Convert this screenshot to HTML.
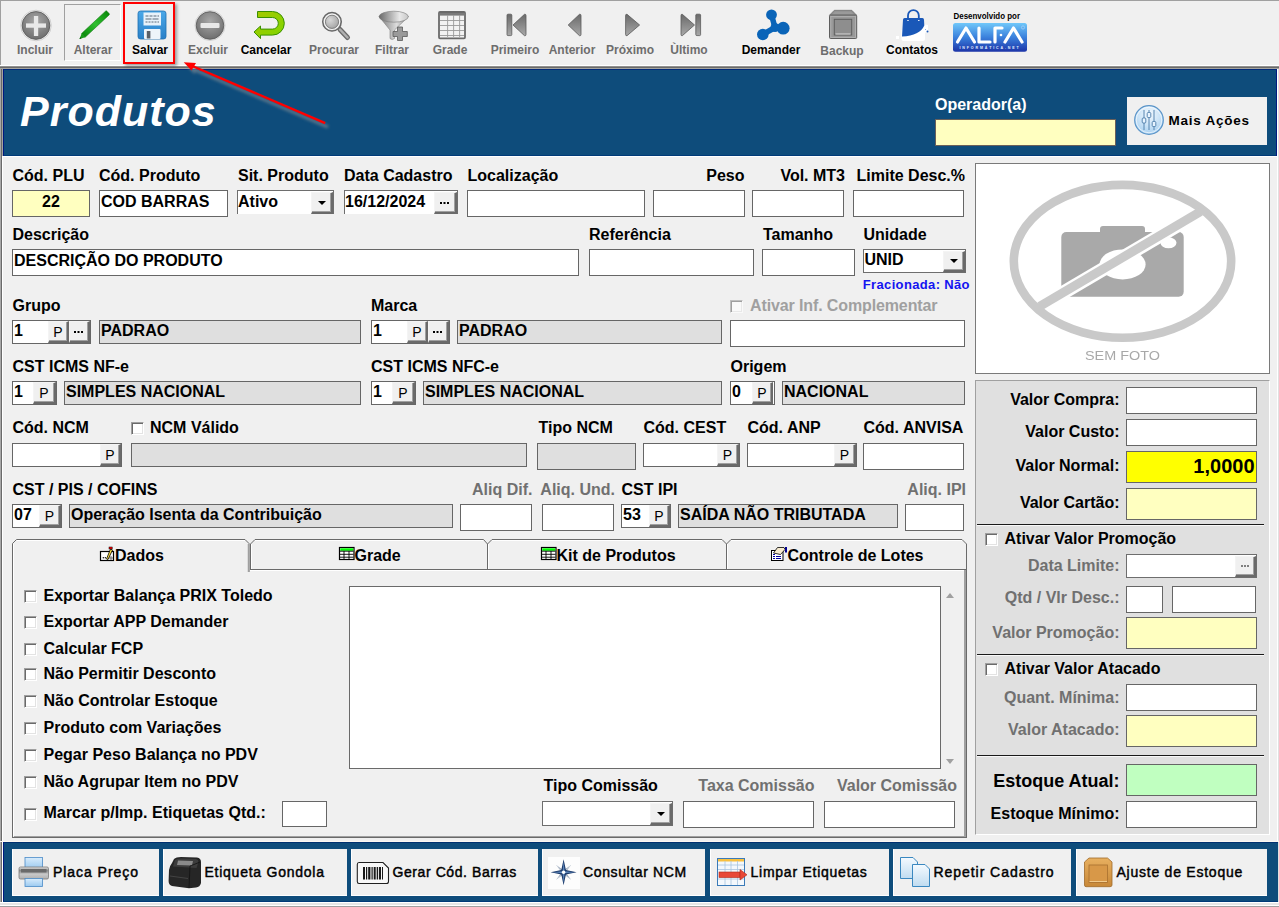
<!DOCTYPE html><html><head><meta charset="utf-8"><style>
*{margin:0;padding:0;box-sizing:border-box}
html,body{width:1279px;height:907px;overflow:hidden;background:#f0f0f0;font-family:"Liberation Sans", sans-serif}
.t{position:absolute;white-space:nowrap;font-family:"Liberation Sans", sans-serif}
.b{position:absolute}
.btn{position:absolute;background:#f0f0f0;border-top:1px solid #f4f4f4;border-left:1px solid #f4f4f4;border-right:2px solid #6a6a6a;border-bottom:2px solid #6a6a6a;box-shadow:inset -1px -1px 0 #a0a0a0}
.pl{position:absolute;left:0;right:0;top:50%;margin-top:-8px;text-align:center;font-size:14px;line-height:16px;font-weight:normal;font-family:"Liberation Sans", sans-serif;color:#000}
.el{position:absolute;left:50%;top:50%;margin-left:-5px;margin-top:-1px;width:2px;height:2px;background:#000;box-shadow:3.5px 0 0 #000,7px 0 0 #000}
.ar{position:absolute;left:50%;top:50%;margin-left:-4px;margin-top:-2px;width:0;height:0;border-left:4px solid transparent;border-right:4px solid transparent;border-top:4px solid #000}
svg{position:absolute}
.cb{position:absolute;width:13px;height:13px;background:#fff;border-top:1px solid #a0a0a0;border-left:1px solid #a0a0a0;border-bottom:1px solid #fff;border-right:1px solid #fff;box-shadow:inset 1px 1px 0 #6a6a6a,inset -1px -1px 0 #e3e3e3}
</style></head><body>
<div class="b" style="left:0px;top:0px;width:1279px;height:1px;background:#a0a0a0;"></div>
<div class="b" style="left:0px;top:0px;width:1px;height:65px;background:#a0a0a0;"></div>
<div class="b" style="left:0px;top:65px;width:1279px;height:1px;background:#ffffff;"></div>
<div class="b" style="left:0px;top:66px;width:1279px;height:1px;background:#909090;"></div>
<div class="b" style="left:0px;top:67px;width:1279px;height:1px;background:#6a6a6a;"></div>
<div class="b" style="left:0px;top:68px;width:1279px;height:1px;background:#a4a4a0;"></div>
<div class="b" style="left:64px;top:4px;width:57px;height:57px;border-top:1px solid #a0a0a0;border-left:1px solid #a0a0a0;border-bottom:1px solid #fff;border-right:1px solid #fff"></div>
<div class="t" style="left:-265px;width:600px;text-align:center;top:43.84px;font-size:12px;line-height:12px;color:#6d6d6d;font-weight:bold;">Incluir</div>
<div class="t" style="left:-207px;width:600px;text-align:center;top:43.84px;font-size:12px;line-height:12px;color:#6d6d6d;font-weight:bold;">Alterar</div>
<div class="t" style="left:-150px;width:600px;text-align:center;top:43.84px;font-size:12px;line-height:12px;color:#000;font-weight:bold;">Salvar</div>
<div class="t" style="left:-92px;width:600px;text-align:center;top:43.84px;font-size:12px;line-height:12px;color:#6d6d6d;font-weight:bold;">Excluir</div>
<div class="t" style="left:-34px;width:600px;text-align:center;top:43.84px;font-size:12px;line-height:12px;color:#000;font-weight:bold;">Cancelar</div>
<div class="t" style="left:34px;width:600px;text-align:center;top:43.84px;font-size:12px;line-height:12px;color:#6d6d6d;font-weight:bold;">Procurar</div>
<div class="t" style="left:92px;width:600px;text-align:center;top:43.84px;font-size:12px;line-height:12px;color:#6d6d6d;font-weight:bold;">Filtrar</div>
<div class="t" style="left:150px;width:600px;text-align:center;top:43.84px;font-size:12px;line-height:12px;color:#6d6d6d;font-weight:bold;">Grade</div>
<div class="t" style="left:215px;width:600px;text-align:center;top:43.84px;font-size:12px;line-height:12px;color:#6d6d6d;font-weight:bold;">Primeiro</div>
<div class="t" style="left:272px;width:600px;text-align:center;top:43.84px;font-size:12px;line-height:12px;color:#6d6d6d;font-weight:bold;">Anterior</div>
<div class="t" style="left:330px;width:600px;text-align:center;top:43.84px;font-size:12px;line-height:12px;color:#6d6d6d;font-weight:bold;">Próximo</div>
<div class="t" style="left:389px;width:600px;text-align:center;top:43.84px;font-size:12px;line-height:12px;color:#6d6d6d;font-weight:bold;">Ùltimo</div>
<div class="t" style="left:471px;width:600px;text-align:center;top:43.84px;font-size:12px;line-height:12px;color:#000;font-weight:bold;">Demander</div>
<div class="t" style="left:542px;width:600px;text-align:center;top:44.84px;font-size:12px;line-height:12px;color:#6d6d6d;font-weight:bold;">Backup</div>
<div class="t" style="left:612px;width:600px;text-align:center;top:43.84px;font-size:12px;line-height:12px;color:#000;font-weight:bold;">Contatos</div>
<svg style="left:0;top:0" width="1040" height="62" viewBox="0 0 1040 62">
<defs>
<radialGradient id="gc" cx="0.5" cy="0.35" r="0.65"><stop offset="0" stop-color="#a8a8a8"/><stop offset="1" stop-color="#6e6e6e"/></radialGradient>
<linearGradient id="gcan" x1="0" y1="0" x2="1" y2="1"><stop offset="0" stop-color="#a6c800"/><stop offset="1" stop-color="#7ed600"/></linearGradient>
<linearGradient id="gpen" x1="0" y1="0" x2="1" y2="0"><stop offset="0" stop-color="#0a8a0a"/><stop offset="0.5" stop-color="#30c030"/><stop offset="1" stop-color="#0a8a0a"/></linearGradient>
<linearGradient id="gflop" x1="0" y1="0" x2="0" y2="1"><stop offset="0" stop-color="#4aa8e8"/><stop offset="1" stop-color="#2a80c8"/></linearGradient>
<radialGradient id="glens" cx="0.4" cy="0.4" r="0.7"><stop offset="0" stop-color="#d8d8d8"/><stop offset="1" stop-color="#909090"/></radialGradient>
<linearGradient id="gfun" x1="0" y1="0" x2="1" y2="0"><stop offset="0" stop-color="#777"/><stop offset="0.6" stop-color="#ddd"/><stop offset="1" stop-color="#888"/></linearGradient>
<linearGradient id="gfun2" x1="0" y1="0" x2="1" y2="0"><stop offset="0" stop-color="#6a6a6a"/><stop offset="0.7" stop-color="#e8e8e8"/><stop offset="1" stop-color="#c8c8c8"/></linearGradient>
<linearGradient id="gnav" x1="0" y1="0" x2="0" y2="1"><stop offset="0" stop-color="#6a6a6a"/><stop offset="1" stop-color="#a8a8a8"/></linearGradient>
<linearGradient id="gbk" x1="0" y1="0" x2="0" y2="1"><stop offset="0" stop-color="#a0a0a0"/><stop offset="1" stop-color="#6a6a6a"/></linearGradient>
<linearGradient id="galfa" x1="0" y1="0" x2="0" y2="1"><stop offset="0" stop-color="#70c8fa"/><stop offset="0.5" stop-color="#3a80dc"/><stop offset="1" stop-color="#1c34a8"/></linearGradient>
</defs>
<!-- Incluir -->
<circle cx="36" cy="25.5" r="15.3" fill="none" stroke="#d0d0d0" stroke-width="1"/>
<circle cx="36" cy="25.5" r="13.9" fill="url(#gc)" stroke="#555" stroke-width="0.8"/>
<rect x="26" y="23.4" width="20" height="4.3" fill="#e8e8e8"/>
<rect x="33.9" y="16" width="4.3" height="20" fill="#e8e8e8"/>
<!-- Alterar pencil -->
<g transform="translate(79.5,39) rotate(-43)">
<rect x="5" y="-2.6" width="34" height="5.2" rx="1" fill="url(#gpen)" stroke="#0a700a" stroke-width="0.5"/>
<polygon points="0,0 5.5,-2.6 5.5,2.6" fill="#1a9a1a"/>
<polygon points="0,0 1.8,-0.9 1.8,0.9" fill="#0a500a"/>
</g>
<!-- Salvar floppy -->
<rect x="138" y="11" width="28" height="28" rx="2.5" fill="url(#gflop)" stroke="#1f6fb0" stroke-width="0.8"/>
<rect x="143.5" y="12.5" width="17.5" height="13" fill="#e8f2fa"/>
<g stroke="#5a6a7a" stroke-width="1">
<line x1="145.5" y1="16" x2="159" y2="16" stroke-dasharray="3,1"/>
<line x1="145.5" y1="19" x2="159" y2="19" stroke-dasharray="6,1"/>
<line x1="145.5" y1="22" x2="159" y2="22" stroke-dasharray="2,1"/>
</g>
<rect x="144" y="29" width="16.5" height="10" rx="1" fill="#eef4fa"/>
<rect x="146.8" y="31" width="3.6" height="7.5" fill="#5a6068"/>
<!-- Excluir -->
<circle cx="210" cy="25.5" r="15" fill="none" stroke="#d0d0d0" stroke-width="1"/>
<circle cx="210" cy="25.5" r="13.8" fill="url(#gc)" stroke="#555" stroke-width="0.8"/>
<rect x="200.5" y="23" width="19" height="5" rx="1" fill="#e8e8e8"/>
<!-- Cancelar -->
<path d="M257.5,11.5 L272.5,11.5 A11.8,11.8 0 0 1 272.5,35.1 L260.5,35.1 L260.5,38.6 L254,32 L260.5,26 L260.5,29.1 L272.5,29.1 A5.8,5.8 0 0 0 272.5,17.5 L257.5,17.5 Z" fill="url(#gcan)" stroke="#3a9000" stroke-width="1"/>
<!-- Procurar -->
<line x1="340" y1="29.5" x2="347.5" y2="37.5" stroke="#6a6a6a" stroke-width="5" stroke-linecap="round"/>
<line x1="340" y1="29.5" x2="347.5" y2="37.5" stroke="#b0b0b0" stroke-width="2.5" stroke-linecap="round"/>
<circle cx="332" cy="21.8" r="9.3" fill="url(#glens)" stroke="#666" stroke-width="1.4"/>
<circle cx="332" cy="21.8" r="7.6" fill="none" stroke="#f4f4f4" stroke-width="1.4"/>
<circle cx="332" cy="21.8" r="6.6" fill="none" stroke="#707070" stroke-width="0.8"/>
<!-- Filtrar -->
<path d="M379,16.5 L390,30 L390,38.5 Q392,40.5 394.5,38.5 L394.5,30 L408.5,16.5 Z" fill="url(#gfun)" stroke="#808080" stroke-width="0.6"/>
<ellipse cx="393.7" cy="16.7" rx="14.6" ry="5.5" fill="url(#gfun2)" stroke="#7a7a7a" stroke-width="0.6"/>
<path d="M397.5,27 h5 v4.5 h4.8 v5 h-4.8 v4 h-5 v-4 h-4.5 v-5 h4.5 Z" fill="#9a9a9a" stroke="#5a5a5a" stroke-width="0.8"/>
<!-- Grade -->
<rect x="439" y="12" width="26" height="26.3" rx="1" fill="#f2f2f2" stroke="#6a6a6a" stroke-width="1.8"/>
<rect x="440" y="13" width="24" height="2.6" fill="#7a7a7a"/>
<g stroke="#9a9a9a" stroke-width="0.9">
<line x1="440" y1="20.5" x2="464" y2="20.5"/><line x1="440" y1="25.5" x2="464" y2="25.5"/><line x1="440" y1="30.5" x2="464" y2="30.5"/><line x1="440" y1="35.5" x2="464" y2="35.5"/>
<line x1="447.6" y1="15" x2="447.6" y2="37"/><line x1="453.6" y1="15" x2="453.6" y2="37"/><line x1="459.6" y1="15" x2="459.6" y2="37"/>
</g>
<!-- Primeiro -->
<rect x="507" y="14.2" width="4.8" height="21.4" rx="1" fill="url(#gnav)" stroke="#5a5a5a" stroke-width="0.8"/>
<path d="M513,25 L524.5,14.3 Q526,14 526,15.5 L526,34.5 Q526,36 524.5,35.7 Z" fill="url(#gnav)" stroke="#5a5a5a" stroke-width="0.8"/>
<!-- Anterior -->
<path d="M568.2,25 L579.5,14.3 Q581,14 581,15.5 L581,34.5 Q581,36 579.5,35.7 Z" fill="url(#gnav)" stroke="#5a5a5a" stroke-width="0.8"/>
<!-- Proximo -->
<path d="M639.6,25 L627,14.3 Q625.6,14 625.6,15.5 L625.6,34.5 Q625.6,36 627,35.7 Z" fill="url(#gnav)" stroke="#5a5a5a" stroke-width="0.8"/>
<!-- Ultimo -->
<path d="M694.5,25 L682.3,14.3 Q681,14 681,15.5 L681,34.5 Q681,36 682.3,35.7 Z" fill="url(#gnav)" stroke="#5a5a5a" stroke-width="0.8"/>
<rect x="695.8" y="14.2" width="4.8" height="21.4" rx="1" fill="url(#gnav)" stroke="#5a5a5a" stroke-width="0.8"/>
<!-- Demander -->
<g fill="#0a64b8" stroke="#0a64b8" stroke-linecap="round">
<line x1="771.5" y1="15" x2="775" y2="27.5" stroke-width="5.5"/>
<line x1="775" y1="27.5" x2="783.4" y2="28.3" stroke-width="6.5"/>
<line x1="775" y1="27.5" x2="762.6" y2="34.6" stroke-width="5.5"/>
<circle cx="771.5" cy="14.8" r="5.4" stroke="none"/>
<circle cx="783.2" cy="28.2" r="6.4" stroke="none"/>
<circle cx="762.8" cy="34.5" r="5.8" stroke="none"/>
<circle cx="775" cy="27.5" r="4.5" stroke="none"/>
</g>
<!-- Backup -->
<path d="M834.3,10.3 L851.8,10.3 L856.6,15.2 L829.5,15.2 Z" fill="#8e8e8e" stroke="#6a6a6a" stroke-width="0.7"/>
<path d="M835,11.5 L851,11.5 L853.5,14.3 L832.5,14.3 Z" fill="#9a9a9a"/>
<rect x="829.5" y="15.2" width="27.2" height="23.3" rx="1" fill="#999" stroke="#5e5e5e" stroke-width="1"/>
<rect x="830.8" y="16.3" width="24.6" height="21.1" fill="none" stroke="#b4b4b4" stroke-width="0.8"/>
<rect x="834.3" y="19.3" width="17.4" height="15.7" fill="#8e8e8e" stroke="#5e5e5e" stroke-width="1"/>
<line x1="835.5" y1="34" x2="850.5" y2="34" stroke="#d8d8d8" stroke-width="1"/>
<!-- Contatos -->
<path d="M901.5,30 L925,24.5 L928,25 L928,31 L925,33 L925,39 Q925,41 923,41 L903.5,41 Q901.5,41 901.5,39 Z" fill="#ffffff"/>
<rect x="896" y="36" width="3" height="3" fill="#fff"/>
<path d="M908,19 L908,15.5 A5.4,5.4 0 0 1 918.8,15.5 L918.8,19" fill="none" stroke="#1a58b8" stroke-width="1.8"/>
<path d="M904.6,18.1 L922.4,18.1 Q924,18.1 924,19.8 L924.3,25.4 Q920,35.5 902,36.6 L903,19.8 Q903,18.1 904.6,18.1 Z" fill="#1a58b8"/>
<ellipse cx="908" cy="20.5" rx="0.9" ry="0.6" fill="#fff"/><ellipse cx="918.8" cy="20.5" rx="0.9" ry="0.6" fill="#fff"/>
<circle cx="927.5" cy="31.5" r="1" fill="#1a58b8"/><circle cx="925.5" cy="29.5" r="0.5" fill="#6a98d8"/>
<!-- ALFA -->
<text x="953.5" y="18.8" font-family="Liberation Sans" font-weight="bold" font-size="8.2" fill="#000" textLength="66.5" lengthAdjust="spacingAndGlyphs">Desenvolvido por</text>
<rect x="953" y="22.9" width="74" height="28.9" rx="2.5" fill="url(#galfa)"/>
<g stroke="#fff" stroke-width="3.2" stroke-linecap="round" stroke-linejoin="round" fill="none">
<polyline points="957.5,42 966,28 974.5,42"/>
<polyline points="979,28 979,42 990,42"/>
<polyline points="995,42 995,28 1002,28"/>
<polyline points="1005,42 1013.5,28 1022,42"/>
</g>
<circle cx="1001" cy="35" r="1.3" fill="#fff"/>
<circle cx="1023" cy="27.5" r="1.6" fill="none" stroke="#b8d8f8" stroke-width="0.6"/>
<text x="959.5" y="49.4" font-family="Liberation Sans" font-weight="bold" font-size="3.6" fill="#e0ecff" letter-spacing="1.85">INFORMÁTICA.NET</text>
</svg>

<div class="b" style="left:123px;top:2px;width:52px;height:62px;border:2px solid #ff0000;box-shadow:2px 2px 3px rgba(0,0,0,0.35)"></div>
<div class="b" style="left:0px;top:69px;width:1279px;height:773px;background:#f0f0f0;"></div>
<div class="b" style="left:0px;top:69px;width:1px;height:838px;background:#a8a8a8;"></div>
<div class="b" style="left:1px;top:69px;width:1px;height:838px;background:#6a6a6a;"></div>
<div class="b" style="left:2px;top:69px;width:1px;height:87px;background:#a4a4a0;"></div>
<div class="b" style="left:2px;top:156px;width:1px;height:746px;background:#ffffff;"></div>
<div class="b" style="left:1277px;top:69px;width:1px;height:833px;background:#ffffff;"></div>
<div class="b" style="left:1278px;top:69px;width:1px;height:833px;background:#e0e0e0;"></div>
<div class="b" style="left:3px;top:69px;width:1274px;height:87px;background:#0e4c7b;"></div>
<div class="b" style="left:3px;top:69px;width:1274px;height:1px;background:#002878;"></div>
<div class="b" style="left:3px;top:155px;width:1274px;height:1px;background:#003a78;"></div>
<div class="b" style="left:3px;top:69px;width:1px;height:87px;background:#001a80;"></div>
<div class="b" style="left:1276px;top:69px;width:1px;height:87px;background:#001a80;"></div>
<div class="b" style="left:3px;top:156px;width:1274px;height:1px;background:#ffffff;"></div>
<div class="t" style="left:20px;top:90.10px;font-size:43px;line-height:43px;color:#fff;font-weight:bold;font-style:italic;letter-spacing:1px;">Produtos</div>
<div class="t" style="left:935px;top:97.46px;font-size:16px;line-height:16px;color:#fff;font-weight:bold;">Operador(a)</div>
<div class="b" style="left:935px;top:119px;width:181px;height:27px;background:#ffffc0;border:1px solid #6a605a;"></div>
<div class="b" style="left:1127px;top:97px;width:140px;height:48px;background:#f0f0f0;"></div>
<div class="t" style="left:1168.5px;top:113.57px;font-size:13.5px;line-height:13.5px;color:#000;font-weight:bold;letter-spacing:0.75px;">Mais Ações</div>
<svg style="left:1132px;top:103px" width="34" height="34" viewBox="1132 103 34 34">
<defs><radialGradient id="gmais" cx="0.5" cy="0.3" r="0.7"><stop offset="0" stop-color="#f4faff"/><stop offset="1" stop-color="#a8d0f0"/></radialGradient></defs>
<circle cx="1149" cy="120" r="14.3" fill="url(#gmais)" stroke="#5a94c8" stroke-width="1.2"/>
<circle cx="1149" cy="120" r="12.8" fill="none" stroke="#ffffff" stroke-width="0.8" opacity="0.8"/>
<g stroke="#4a7aa8" stroke-width="0.9" fill="#e8f4ff">
<line x1="1144" y1="110" x2="1144" y2="130"/><line x1="1149" y1="110" x2="1149" y2="130"/><line x1="1154" y1="110" x2="1154" y2="130"/>
<rect x="1142.2" y="118" width="3.6" height="5" rx="1"/><rect x="1147.2" y="112.5" width="3.6" height="5" rx="1"/><rect x="1152.2" y="121.5" width="3.6" height="5" rx="1"/>
</g>
</svg>

<svg style="left:0;top:0" width="400" height="160"><defs><filter id="sh" x="-30%" y="-30%" width="160%" height="160%"><feGaussianBlur stdDeviation="1.6"/></filter></defs><g opacity="0.55" transform="translate(3,4)" filter="url(#sh)"><line x1="325" y1="123" x2="190" y2="65" stroke="#9a9a9a" stroke-width="3"/><polygon points="183.75,62.2 195.5,63 191.5,70" fill="#9a9a9a"/></g><line x1="325.2" y1="123.1" x2="190" y2="65" stroke="#ff0000" stroke-width="2.4"/><polygon points="183.75,62.2 196,63 191.5,70.5" fill="#ff0000"/></svg>
<div class="t" style="left:12.5px;top:167.96px;font-size:16px;line-height:16px;color:#000;font-weight:bold;">Cód. PLU</div>
<div class="t" style="left:99px;top:167.96px;font-size:16px;line-height:16px;color:#000;font-weight:bold;">Cód. Produto</div>
<div class="t" style="left:238px;top:167.96px;font-size:16px;line-height:16px;color:#000;font-weight:bold;">Sit. Produto</div>
<div class="t" style="left:344px;top:167.96px;font-size:16px;line-height:16px;color:#000;font-weight:bold;">Data Cadastro</div>
<div class="t" style="left:467.5px;top:167.96px;font-size:16px;line-height:16px;color:#000;font-weight:bold;">Localização</div>
<div class="t" style="left:144.5px;width:600px;text-align:right;top:167.96px;font-size:16px;line-height:16px;color:#000;font-weight:bold;">Peso</div>
<div class="t" style="left:245px;width:600px;text-align:right;top:167.96px;font-size:16px;line-height:16px;color:#000;font-weight:bold;">Vol. MT3</div>
<div class="t" style="left:365px;width:600px;text-align:right;top:167.96px;font-size:16px;line-height:16px;color:#000;font-weight:bold;">Limite Desc.%</div>
<div class="b" style="left:12px;top:190px;width:78px;height:27px;background:#ffffc0;border:1px solid #666666;"></div>
<div class="t" style="left:-249.0px;width:600px;text-align:center;top:194.26px;font-size:16px;line-height:16px;color:#000;font-weight:bold;">22</div>
<div class="b" style="left:99px;top:190px;width:129px;height:27px;background:#fff;border:1px solid #666666;"></div>
<div class="t" style="left:101px;top:194.26px;font-size:16px;line-height:16px;color:#000;font-weight:bold;">COD BARRAS</div>
<div class="b" style="left:237px;top:190px;width:97px;height:24px;background:#fff;border-top:1px solid #6e6e6e;border-left:1px solid #6e6e6e;border-right:1px solid #6e6e6e"></div>
<div class="t" style="left:238px;top:194.46px;font-size:16px;line-height:16px;color:#000;font-weight:bold;">Ativo</div>
<div class="btn" style="left:311px;top:192px;width:22px;height:22px;"><span class="ar"></span></div>
<div class="b" style="left:344px;top:190px;width:114px;height:24px;background:#fff;border-top:1px solid #6e6e6e;border-left:1px solid #6e6e6e;border-right:1px solid #6e6e6e"></div>
<div class="t" style="left:345px;top:194.46px;font-size:16px;line-height:16px;color:#000;font-weight:bold;">16/12/2024</div>
<div class="btn" style="left:434px;top:192px;width:23px;height:22px;"><span class="el"></span></div>
<div class="b" style="left:467px;top:190px;width:178px;height:27px;background:#fff;border:1px solid #666666;"></div>
<div class="b" style="left:653px;top:190px;width:92px;height:27px;background:#fff;border:1px solid #666666;"></div>
<div class="b" style="left:752px;top:190px;width:92px;height:27px;background:#fff;border:1px solid #666666;"></div>
<div class="b" style="left:853px;top:190px;width:111px;height:27px;background:#fff;border:1px solid #666666;"></div>
<div class="t" style="left:12.5px;top:227.46px;font-size:16px;line-height:16px;color:#000;font-weight:bold;">Descrição</div>
<div class="t" style="left:589px;top:227.46px;font-size:16px;line-height:16px;color:#000;font-weight:bold;">Referência</div>
<div class="t" style="left:763px;top:227.46px;font-size:16px;line-height:16px;color:#000;font-weight:bold;">Tamanho</div>
<div class="t" style="left:863.5px;top:227.46px;font-size:16px;line-height:16px;color:#000;font-weight:bold;">Unidade</div>
<div class="b" style="left:12px;top:249px;width:567px;height:27px;background:#fff;border:1px solid #666666;"></div>
<div class="t" style="left:14px;top:253.26px;font-size:16px;line-height:16px;color:#000;font-weight:bold;">DESCRIÇÃO DO PRODUTO</div>
<div class="b" style="left:589px;top:249px;width:165px;height:27px;background:#fff;border:1px solid #666666;"></div>
<div class="b" style="left:762px;top:249px;width:93px;height:27px;background:#fff;border:1px solid #666666;"></div>
<div class="b" style="left:863px;top:249px;width:103px;height:24px;background:#fff;border-top:1px solid #6e6e6e;border-left:1px solid #6e6e6e;border-right:1px solid #6e6e6e;border-bottom:1px solid #6e6e6e"></div>
<div class="t" style="left:864.5px;top:251.96px;font-size:16px;line-height:16px;color:#000;font-weight:bold;">UNID</div>
<div class="btn" style="left:943px;top:251px;width:22px;height:21px;"><span class="ar"></span></div>
<div class="t" style="left:862.8px;top:278.00px;font-size:13px;line-height:13px;color:#1414f0;font-weight:bold;letter-spacing:0.35px;">Fracionada: Não</div>
<div class="t" style="left:12.5px;top:298.46px;font-size:16px;line-height:16px;color:#000;font-weight:bold;">Grupo</div>
<div class="t" style="left:371px;top:298.46px;font-size:16px;line-height:16px;color:#000;font-weight:bold;">Marca</div>
<div class="cb" style="left:730px;top:300px;opacity:0.6"></div>
<div class="t" style="left:750px;top:298.46px;font-size:16px;line-height:16px;color:#a0a0a0;font-weight:bold;letter-spacing:-0.12px;">Ativar Inf. Complementar</div>
<div class="b" style="left:12px;top:320px;width:79px;height:24px;background:#fff;border:1px solid #666666;"></div>
<div class="t" style="left:14px;top:322.76px;font-size:16px;line-height:16px;color:#000;font-weight:bold;">1</div>
<div class="btn" style="left:48px;top:321px;width:21px;height:22px;"><span class="pl">P</span></div>
<div class="btn" style="left:69px;top:321px;width:21px;height:22px;"><span class="el"></span></div>
<div class="b" style="left:99px;top:320px;width:262px;height:24px;background:#dfdfdf;border:1px solid #666666;"></div>
<div class="t" style="left:101px;top:322.76px;font-size:16px;line-height:16px;color:#000;font-weight:bold;">PADRAO</div>
<div class="b" style="left:371px;top:320px;width:79px;height:24px;background:#fff;border:1px solid #666666;"></div>
<div class="t" style="left:373px;top:322.76px;font-size:16px;line-height:16px;color:#000;font-weight:bold;">1</div>
<div class="btn" style="left:407px;top:321px;width:21px;height:22px;"><span class="pl">P</span></div>
<div class="btn" style="left:428px;top:321px;width:21px;height:22px;"><span class="el"></span></div>
<div class="b" style="left:457px;top:320px;width:265px;height:24px;background:#dfdfdf;border:1px solid #666666;"></div>
<div class="t" style="left:459px;top:322.76px;font-size:16px;line-height:16px;color:#000;font-weight:bold;">PADRAO</div>
<div class="b" style="left:730px;top:320px;width:235px;height:27px;background:#fff;border:1px solid #666666;"></div>
<div class="t" style="left:12.5px;top:359.46px;font-size:16px;line-height:16px;color:#000;font-weight:bold;">CST ICMS NF-e</div>
<div class="t" style="left:371px;top:359.46px;font-size:16px;line-height:16px;color:#000;font-weight:bold;">CST ICMS NFC-e</div>
<div class="t" style="left:730.5px;top:359.46px;font-size:16px;line-height:16px;color:#000;font-weight:bold;">Origem</div>
<div class="b" style="left:12px;top:381px;width:45px;height:24px;background:#fff;border:1px solid #666666;"></div>
<div class="t" style="left:14px;top:383.76px;font-size:16px;line-height:16px;color:#000;font-weight:bold;">1</div>
<div class="btn" style="left:33px;top:382px;width:23px;height:22px;"><span class="pl">P</span></div>
<div class="b" style="left:64px;top:381px;width:297px;height:24px;background:#dfdfdf;border:1px solid #666666;"></div>
<div class="t" style="left:66px;top:383.76px;font-size:16px;line-height:16px;color:#000;font-weight:bold;">SIMPLES NACIONAL</div>
<div class="b" style="left:371px;top:381px;width:45px;height:24px;background:#fff;border:1px solid #666666;"></div>
<div class="t" style="left:373px;top:383.76px;font-size:16px;line-height:16px;color:#000;font-weight:bold;">1</div>
<div class="btn" style="left:392px;top:382px;width:23px;height:22px;"><span class="pl">P</span></div>
<div class="b" style="left:423px;top:381px;width:299px;height:24px;background:#dfdfdf;border:1px solid #666666;"></div>
<div class="t" style="left:425px;top:383.76px;font-size:16px;line-height:16px;color:#000;font-weight:bold;">SIMPLES NACIONAL</div>
<div class="b" style="left:730px;top:381px;width:45px;height:24px;background:#fff;border:1px solid #666666;"></div>
<div class="t" style="left:732px;top:383.76px;font-size:16px;line-height:16px;color:#000;font-weight:bold;">0</div>
<div class="btn" style="left:752px;top:382px;width:21px;height:22px;"><span class="pl">P</span></div>
<div class="b" style="left:782px;top:381px;width:183px;height:24px;background:#dfdfdf;border:1px solid #666666;"></div>
<div class="t" style="left:784px;top:383.76px;font-size:16px;line-height:16px;color:#000;font-weight:bold;">NACIONAL</div>
<div class="t" style="left:12.5px;top:420.46px;font-size:16px;line-height:16px;color:#000;font-weight:bold;">Cód. NCM</div>
<div class="cb" style="left:131px;top:422px"></div>
<div class="t" style="left:150px;top:420.46px;font-size:16px;line-height:16px;color:#000;font-weight:bold;">NCM Válido</div>
<div class="t" style="left:538.5px;top:420.46px;font-size:16px;line-height:16px;color:#000;font-weight:bold;">Tipo NCM</div>
<div class="t" style="left:643.5px;top:420.46px;font-size:16px;line-height:16px;color:#000;font-weight:bold;">Cód. CEST</div>
<div class="t" style="left:747.5px;top:420.46px;font-size:16px;line-height:16px;color:#000;font-weight:bold;">Cód. ANP</div>
<div class="t" style="left:863.5px;top:420.46px;font-size:16px;line-height:16px;color:#000;font-weight:bold;">Cód. ANVISA</div>
<div class="b" style="left:12px;top:443px;width:110px;height:24px;background:#fff;border:1px solid #666666;"></div>
<div class="btn" style="left:100px;top:444px;width:21px;height:22px;"><span class="pl">P</span></div>
<div class="b" style="left:131px;top:443px;width:396px;height:24px;background:#dfdfdf;border:1px solid #666666;"></div>
<div class="b" style="left:537px;top:443px;width:99px;height:27px;background:#dfdfdf;border:1px solid #666666;"></div>
<div class="b" style="left:643px;top:443px;width:97px;height:24px;background:#fff;border:1px solid #666666;"></div>
<div class="btn" style="left:717px;top:444px;width:22px;height:22px;"><span class="pl">P</span></div>
<div class="b" style="left:747px;top:443px;width:110px;height:24px;background:#fff;border:1px solid #666666;"></div>
<div class="btn" style="left:834px;top:444px;width:22px;height:22px;"><span class="pl">P</span></div>
<div class="b" style="left:863px;top:443px;width:101px;height:27px;background:#fff;border:1px solid #666666;"></div>
<div class="t" style="left:12.5px;top:481.96px;font-size:16px;line-height:16px;color:#000;font-weight:bold;">CST / PIS / COFINS</div>
<div class="t" style="left:-67.5px;width:600px;text-align:right;top:481.96px;font-size:16px;line-height:16px;color:#707070;font-weight:bold;">Aliq Dif.</div>
<div class="t" style="left:15px;width:600px;text-align:right;top:481.96px;font-size:16px;line-height:16px;color:#707070;font-weight:bold;">Aliq. Und.</div>
<div class="t" style="left:621.5px;top:481.96px;font-size:16px;line-height:16px;color:#000;font-weight:bold;">CST IPI</div>
<div class="t" style="left:366px;width:600px;text-align:right;top:481.96px;font-size:16px;line-height:16px;color:#707070;font-weight:bold;">Aliq. IPI</div>
<div class="b" style="left:12px;top:504px;width:50px;height:24px;background:#fff;border:1px solid #666666;"></div>
<div class="t" style="left:14px;top:506.76px;font-size:16px;line-height:16px;color:#000;font-weight:bold;">07</div>
<div class="btn" style="left:39px;top:505px;width:22px;height:22px;"><span class="pl">P</span></div>
<div class="b" style="left:69px;top:504px;width:384px;height:24px;background:#dfdfdf;border:1px solid #666666;"></div>
<div class="t" style="left:71px;top:506.76px;font-size:16px;line-height:16px;color:#000;font-weight:bold;">Operação Isenta da Contribuição</div>
<div class="b" style="left:460px;top:504px;width:72px;height:27px;background:#fff;border:1px solid #666666;"></div>
<div class="b" style="left:542px;top:504px;width:72px;height:27px;background:#fff;border:1px solid #666666;"></div>
<div class="b" style="left:621px;top:504px;width:50px;height:24px;background:#fff;border:1px solid #666666;"></div>
<div class="t" style="left:623px;top:506.76px;font-size:16px;line-height:16px;color:#000;font-weight:bold;">53</div>
<div class="btn" style="left:649px;top:505px;width:21px;height:22px;"><span class="pl">P</span></div>
<div class="b" style="left:678px;top:504px;width:220px;height:24px;background:#dfdfdf;border:1px solid #666666;"></div>
<div class="t" style="left:680px;top:506.76px;font-size:16px;line-height:16px;color:#000;font-weight:bold;">SAÍDA NÃO TRIBUTADA</div>
<div class="b" style="left:905px;top:504px;width:59px;height:27px;background:#fff;border:1px solid #666666;"></div>
<svg style="left:0;top:530px" width="980" height="315" viewBox="0 530 980 315">
<!-- panel body -->
<rect x="12" y="569" width="954" height="268" fill="#f0f0f0"/>
<!-- panel borders -->
<line x1="12.5" y1="569" x2="12.5" y2="837.5" stroke="#6a6a6a" stroke-width="1"/>
<line x1="13.5" y1="569" x2="13.5" y2="836" stroke="#ffffff" stroke-width="1"/>
<line x1="12" y1="837.5" x2="967" y2="837.5" stroke="#6a6a6a" stroke-width="1"/>
<line x1="14" y1="836.5" x2="965" y2="836.5" stroke="#a0a0a0" stroke-width="1"/>
<line x1="966.5" y1="569" x2="966.5" y2="838" stroke="#6a6a6a" stroke-width="1"/>
<line x1="964.5" y1="570" x2="964.5" y2="837" stroke="#a0a0a0" stroke-width="1"/>
<line x1="965.5" y1="570" x2="965.5" y2="837" stroke="#a0a0a0" stroke-width="1"/>
<!-- inactive tabs -->
<path d="M250.5,569.5 V544 L255,539.5 H483.5 L487.5,544 V569.5" fill="#f0f0f0" stroke="#6a6a6a" stroke-width="1"/>
<path d="M487.5,569.5 V544 L492,539.5 H722 L726.5,544 V569.5" fill="#f0f0f0" stroke="#6a6a6a" stroke-width="1"/>
<path d="M726.5,569.5 V544 L731,539.5 H962 L966.5,544 V569.5" fill="#f0f0f0" stroke="#6a6a6a" stroke-width="1"/>
<line x1="251.5" y1="544" x2="251.5" y2="569" stroke="#fff"/>
<line x1="255" y1="540.5" x2="483" y2="540.5" stroke="#fff"/>
<line x1="488.5" y1="544" x2="488.5" y2="569" stroke="#fff"/>
<line x1="492" y1="540.5" x2="722" y2="540.5" stroke="#fff"/>
<line x1="727.5" y1="544" x2="727.5" y2="569" stroke="#fff"/>
<line x1="731" y1="540.5" x2="962" y2="540.5" stroke="#fff"/>
<!-- strip bottom line (inactive tabs) -->
<line x1="250" y1="569.5" x2="967" y2="569.5" stroke="#6a6a6a" stroke-width="1"/>
<line x1="250" y1="570.5" x2="964" y2="570.5" stroke="#ffffff" stroke-width="1"/>
<!-- active tab -->
<path d="M12.5,572 V543.5 L16.5,539.5 H245 L249,543.5 V572" fill="#f0f0f0" stroke="#6a6a6a" stroke-width="1"/>
<rect x="14" y="544" width="233" height="28" fill="#f0f0f0"/>
<line x1="13.5" y1="544" x2="13.5" y2="572" stroke="#fff"/>
<line x1="17" y1="540.5" x2="245" y2="540.5" stroke="#fff"/>
<line x1="248.5" y1="544" x2="248.5" y2="572" stroke="#a0a0a0" stroke-width="1.5"/>
<!-- Dados icon -->
<rect x="100.5" y="551.5" width="13" height="9" fill="#fff" stroke="#000" stroke-width="1.2"/>
<circle cx="103.3" cy="557.8" r="0.7" fill="#000"/><circle cx="105.3" cy="557.8" r="0.7" fill="#000"/>
<path d="M106.5,559 L110.5,549 L112.5,550 L108,559.5 Z" fill="#ffe040" stroke="#000" stroke-width="0.8"/>
<rect x="109" y="547" width="3.2" height="2" fill="#ff0000" stroke="#000" stroke-width="0.5"/>
<circle cx="111" cy="558" r="1.2" fill="none" stroke="#000" stroke-width="0.6"/>
<!-- Grade icon -->
<rect x="339.5" y="547.5" width="14.5" height="12" fill="#fff" stroke="#000" stroke-width="1.2"/>
<rect x="340.3" y="548.3" width="12.9" height="2.5" fill="#00ff00"/>
<g stroke="#000" stroke-width="0.9"><line x1="340" y1="551.2" x2="353.5" y2="551.2"/><line x1="340" y1="554.3" x2="353.5" y2="554.3"/><line x1="340" y1="557.2" x2="353.5" y2="557.2"/><line x1="344" y1="551" x2="344" y2="559.5"/><line x1="349" y1="551" x2="349" y2="559.5"/></g>
<!-- Kit icon -->
<rect x="541.5" y="547.5" width="14.5" height="12" fill="#fff" stroke="#000" stroke-width="1.2"/>
<rect x="542.3" y="548.3" width="12.9" height="2.5" fill="#00ff00"/>
<g stroke="#000" stroke-width="0.9"><line x1="542" y1="551.2" x2="555.5" y2="551.2"/><line x1="542" y1="554.3" x2="555.5" y2="554.3"/><line x1="542" y1="557.2" x2="555.5" y2="557.2"/><line x1="546" y1="551" x2="546" y2="559.5"/><line x1="551" y1="551" x2="551" y2="559.5"/></g>
<!-- Controle icon -->
<rect x="771.5" y="550.5" width="11.5" height="10" fill="#fff" stroke="#000" stroke-width="1"/>
<g stroke="#0000a0" stroke-width="1"><line x1="773" y1="554.5" x2="775" y2="554.5"/><line x1="776" y1="556.5" x2="781" y2="556.5"/><line x1="773" y1="556.5" x2="775" y2="556.5"/><line x1="776" y1="558.5" x2="781" y2="558.5"/><line x1="773" y1="558.5" x2="775" y2="558.5"/></g>
<path d="M773.5,553 L777.5,547.5 H784 L785,549.5 L780.5,554.5 Z" fill="#f8ecd0" stroke="#000" stroke-width="0.8"/>
<rect x="785" y="547" width="2" height="5.5" fill="#000090"/>
<!-- memo -->
<rect x="349.5" y="586.5" width="591" height="182" fill="#fff" stroke="#6a6a6a" stroke-width="1"/>
<polygon points="946,598 954,598 950,593" fill="#a0a0a0"/>
<polygon points="946,759 954,759 950,764" fill="#a0a0a0"/>
</svg>
<div class="t" style="left:115px;top:547.5px;font-size:16px;line-height:16px;font-weight:bold">Dados</div>
<div class="t" style="left:354.5px;top:547.5px;font-size:16px;line-height:16px;font-weight:bold">Grade</div>
<div class="t" style="left:556.5px;top:547.5px;font-size:16px;line-height:16px;font-weight:bold">Kit de Produtos</div>
<div class="t" style="left:787.5px;top:547.5px;font-size:16px;line-height:16px;font-weight:bold">Controle de Lotes</div>

<div class="cb" style="left:24px;top:590px"></div>
<div class="t" style="left:43.5px;top:587.96px;font-size:16px;line-height:16px;color:#000;font-weight:bold;">Exportar Balança PRIX Toledo</div>
<div class="cb" style="left:24px;top:616px"></div>
<div class="t" style="left:43.5px;top:614.46px;font-size:16px;line-height:16px;color:#000;font-weight:bold;">Exportar APP Demander</div>
<div class="cb" style="left:24px;top:643px"></div>
<div class="t" style="left:43.5px;top:641.06px;font-size:16px;line-height:16px;color:#000;font-weight:bold;">Calcular FCP</div>
<div class="cb" style="left:24px;top:668px"></div>
<div class="t" style="left:43.5px;top:665.96px;font-size:16px;line-height:16px;color:#000;font-weight:bold;">Não Permitir Desconto</div>
<div class="cb" style="left:24px;top:695px"></div>
<div class="t" style="left:43.5px;top:693.16px;font-size:16px;line-height:16px;color:#000;font-weight:bold;">Não Controlar Estoque</div>
<div class="cb" style="left:24px;top:722px"></div>
<div class="t" style="left:43.5px;top:720.46px;font-size:16px;line-height:16px;color:#000;font-weight:bold;">Produto com Variações</div>
<div class="cb" style="left:24px;top:749px"></div>
<div class="t" style="left:43.5px;top:746.76px;font-size:16px;line-height:16px;color:#000;font-weight:bold;">Pegar Peso Balança no PDV</div>
<div class="cb" style="left:24px;top:776px"></div>
<div class="t" style="left:43.5px;top:774.46px;font-size:16px;line-height:16px;color:#000;font-weight:bold;">Não Agrupar Item no PDV</div>
<div class="cb" style="left:24px;top:808px"></div>
<div class="t" style="left:43.5px;top:805.46px;font-size:16px;line-height:16px;color:#000;font-weight:bold;">Marcar p/Imp. Etiquetas Qtd.:</div>
<div class="b" style="left:282px;top:801px;width:45px;height:26px;background:#fff;border:1px solid #666666;"></div>
<div class="t" style="left:543.5px;top:778.46px;font-size:16px;line-height:16px;color:#000;font-weight:bold;">Tipo Comissão</div>
<div class="t" style="left:214.5px;width:600px;text-align:right;top:778.46px;font-size:16px;line-height:16px;color:#707070;font-weight:bold;">Taxa Comissão</div>
<div class="t" style="left:357px;width:600px;text-align:right;top:778.46px;font-size:16px;line-height:16px;color:#707070;font-weight:bold;">Valor Comissão</div>
<div class="b" style="left:542px;top:801px;width:131px;height:25px;background:#fff;border:1px solid #6e6e6e"></div>
<div class="btn" style="left:650px;top:803px;width:22px;height:22px;"><span class="ar"></span></div>
<div class="b" style="left:683px;top:801px;width:131px;height:27px;background:#fff;border:1px solid #666666;"></div>
<div class="b" style="left:824px;top:801px;width:131px;height:27px;background:#fff;border:1px solid #666666;"></div>
<div class="b" style="left:975px;top:163px;width:295px;height:211px;background:#fff;border:1px solid #7a7a7a"></div>
<svg style="left:975px;top:163px" width="295" height="211" viewBox="975 163 295 211">
<ellipse cx="1122.5" cy="261.3" rx="108.7" ry="76.4" fill="none" stroke="#c9c9c9" stroke-width="8.6"/>
<rect x="1100" y="226" width="45" height="12" rx="3" fill="#a9a9a9"/>
<rect x="1061.3" y="232" width="122.4" height="64.8" rx="5" fill="#a9a9a9"/>
<ellipse cx="1122.6" cy="264.4" rx="23" ry="15" fill="#fff"/>
<ellipse cx="1168.5" cy="242.8" rx="8" ry="5.5" fill="#fff"/>
<line x1="1055" y1="297.5" x2="1190" y2="218" stroke="#fff" stroke-width="14"/>
<line x1="1039.7" y1="306.3" x2="1200.4" y2="211.7" stroke="#c9c9c9" stroke-width="9"/>
</svg>
<div class="t" style="left:1085px;top:349.5px;font-size:12px;line-height:12px;color:#a8a8a8;transform:scaleX(1.2);transform-origin:0 0">SEM FOTO</div>

<div class="b" style="left:975px;top:380px;width:295px;height:455px;background:#e0e0e0;border-top:1px solid #a0a0a0;border-left:1px solid #a0a0a0;border-bottom:1px solid #fff;border-right:1px solid #fff"></div>
<div class="t" style="left:519.5px;width:600px;text-align:right;top:391.96px;font-size:16px;line-height:16px;color:#000;font-weight:bold;">Valor Compra:</div>
<div class="b" style="left:1126px;top:387px;width:131px;height:27px;background:#fff;border:1px solid #666666;"></div>
<div class="t" style="left:519.5px;width:600px;text-align:right;top:424.46px;font-size:16px;line-height:16px;color:#000;font-weight:bold;">Valor Custo:</div>
<div class="b" style="left:1126px;top:419px;width:131px;height:27px;background:#fff;border:1px solid #666666;"></div>
<div class="t" style="left:519.5px;width:600px;text-align:right;top:457.96px;font-size:16px;line-height:16px;color:#000;font-weight:bold;">Valor Normal:</div>
<div class="b" style="left:1126px;top:451px;width:131px;height:32px;background:#ffff00;border:1px solid #666666;"></div>
<div class="t" style="left:654.5px;width:600px;text-align:right;top:456.07px;font-size:20px;line-height:20px;color:#000;font-weight:bold;">1,0000</div>
<div class="t" style="left:519.5px;width:600px;text-align:right;top:495.46px;font-size:16px;line-height:16px;color:#000;font-weight:bold;">Valor Cartão:</div>
<div class="b" style="left:1126px;top:488px;width:131px;height:32px;background:#ffffc0;border:1px solid #666666;"></div>
<div class="b" style="left:977px;top:524px;width:287px;height:1px;background:#1a1a1a;"></div>
<div class="b" style="left:977px;top:525px;width:287px;height:1px;background:#f8f8f8;"></div>
<div class="cb" style="left:985px;top:533px"></div>
<div class="t" style="left:1004.5px;top:531.46px;font-size:16px;line-height:16px;color:#000;font-weight:bold;">Ativar Valor Promoção</div>
<div class="t" style="left:519.5px;width:600px;text-align:right;top:558.46px;font-size:16px;line-height:16px;color:#707070;font-weight:bold;">Data Limite:</div>
<div class="b" style="left:1126px;top:554px;width:131px;height:24px;background:#fff;border-top:1px solid #6e6e6e;border-left:1px solid #6e6e6e;border-right:1px solid #6e6e6e;border-bottom:1px solid #6e6e6e"></div>
<div class="btn" style="left:1235px;top:556px;width:21px;height:21px;"><span class="el" style="background:#808080;width:1.5px;height:1.5px;box-shadow:3px 0 0 #808080,6px 0 0 #808080;margin-left:-4px"></span></div>
<div class="t" style="left:519.5px;width:600px;text-align:right;top:590.46px;font-size:16px;line-height:16px;color:#707070;font-weight:bold;">Qtd / Vlr Desc.:</div>
<div class="b" style="left:1126px;top:586px;width:37px;height:27px;background:#fff;border:1px solid #666666;"></div>
<div class="b" style="left:1172px;top:586px;width:84px;height:27px;background:#fff;border:1px solid #666666;"></div>
<div class="t" style="left:519.5px;width:600px;text-align:right;top:624.96px;font-size:16px;line-height:16px;color:#707070;font-weight:bold;">Valor Promoção:</div>
<div class="b" style="left:1126px;top:617px;width:131px;height:32px;background:#ffffc0;border:1px solid #666666;"></div>
<div class="b" style="left:977px;top:654px;width:287px;height:1px;background:#1a1a1a;"></div>
<div class="b" style="left:977px;top:655px;width:287px;height:1px;background:#f8f8f8;"></div>
<div class="cb" style="left:985px;top:663px"></div>
<div class="t" style="left:1004.5px;top:661.46px;font-size:16px;line-height:16px;color:#000;font-weight:bold;">Ativar Valor Atacado</div>
<div class="t" style="left:519.5px;width:600px;text-align:right;top:690.46px;font-size:16px;line-height:16px;color:#707070;font-weight:bold;">Quant. Mínima:</div>
<div class="b" style="left:1126px;top:684px;width:131px;height:27px;background:#fff;border:1px solid #666666;"></div>
<div class="t" style="left:519.5px;width:600px;text-align:right;top:722.46px;font-size:16px;line-height:16px;color:#707070;font-weight:bold;">Valor Atacado:</div>
<div class="b" style="left:1126px;top:715px;width:131px;height:32px;background:#ffffc0;border:1px solid #666666;"></div>
<div class="b" style="left:977px;top:755px;width:287px;height:1px;background:#1a1a1a;"></div>
<div class="b" style="left:977px;top:756px;width:287px;height:1px;background:#f8f8f8;"></div>
<div class="t" style="left:519.5px;width:600px;text-align:right;top:771.76px;font-size:18px;line-height:18px;color:#000;font-weight:bold;">Estoque Atual:</div>
<div class="b" style="left:1126px;top:764px;width:131px;height:32px;background:#c0ffc0;border:1px solid #666666;"></div>
<div class="t" style="left:519.5px;width:600px;text-align:right;top:806.46px;font-size:16px;line-height:16px;color:#000;font-weight:bold;">Estoque Mínimo:</div>
<div class="b" style="left:1126px;top:801px;width:131px;height:27px;background:#fff;border:1px solid #666666;"></div>
<div class="b" style="left:0px;top:841px;width:1279px;height:1px;background:#fbf7f0;"></div>
<div class="b" style="left:3px;top:842px;width:1275px;height:60px;background:#0e4c7b;"></div>
<div class="b" style="left:3px;top:842px;width:1275px;height:1px;background:#003070;"></div>
<div class="b" style="left:3px;top:842px;width:1px;height:60px;background:#001a80;"></div>
<div class="b" style="left:3px;top:901px;width:1275px;height:1px;background:#003a78;"></div>
<div class="b" style="left:0px;top:902px;width:1279px;height:1px;background:#ffffff;"></div>
<div class="b" style="left:0px;top:903px;width:1279px;height:2px;background:#e6e6e6;"></div>
<div class="b" style="left:0px;top:905px;width:1279px;height:1px;background:#ffffff;"></div>
<div class="b" style="left:0px;top:906px;width:1279px;height:1px;background:#a0a0a0;"></div>
<div class="b" style="left:12px;top:849px;width:147px;height:47px;background:#f0f0f0;border-left:1px solid #fff;border-bottom:1px solid #fff"></div>
<div class="t" style="left:53px;top:865.15px;font-size:14px;line-height:14px;color:#000;font-weight:normal;letter-spacing:0.95px;-webkit-text-stroke:0.45px #000;">Placa Preço</div>
<div class="b" style="left:163px;top:849px;width:184px;height:47px;background:#f0f0f0;border-left:1px solid #fff;border-bottom:1px solid #fff"></div>
<div class="t" style="left:204.5px;top:865.15px;font-size:14px;line-height:14px;color:#000;font-weight:normal;letter-spacing:0.75px;-webkit-text-stroke:0.45px #000;">Etiqueta Gondola</div>
<div class="b" style="left:351px;top:849px;width:187px;height:47px;background:#f0f0f0;border-left:1px solid #fff;border-bottom:1px solid #fff"></div>
<div class="t" style="left:392.5px;top:865.15px;font-size:14px;line-height:14px;color:#000;font-weight:normal;letter-spacing:0.58px;-webkit-text-stroke:0.45px #000;">Gerar Cód. Barras</div>
<div class="b" style="left:542px;top:849px;width:163px;height:47px;background:#f0f0f0;border-left:1px solid #fff;border-bottom:1px solid #fff"></div>
<div class="t" style="left:583px;top:865.15px;font-size:14px;line-height:14px;color:#000;font-weight:normal;letter-spacing:0.62px;-webkit-text-stroke:0.45px #000;">Consultar NCM</div>
<div class="b" style="left:710px;top:849px;width:179px;height:47px;background:#f0f0f0;border-left:1px solid #fff;border-bottom:1px solid #fff"></div>
<div class="t" style="left:750.5px;top:865.15px;font-size:14px;line-height:14px;color:#000;font-weight:normal;letter-spacing:0.75px;-webkit-text-stroke:0.45px #000;">Limpar Etiquetas</div>
<div class="b" style="left:893px;top:849px;width:178px;height:47px;background:#f0f0f0;border-left:1px solid #fff;border-bottom:1px solid #fff"></div>
<div class="t" style="left:933.5px;top:865.15px;font-size:14px;line-height:14px;color:#000;font-weight:normal;letter-spacing:0.95px;-webkit-text-stroke:0.45px #000;">Repetir Cadastro</div>
<div class="b" style="left:1076px;top:849px;width:191px;height:47px;background:#f0f0f0;border-left:1px solid #fff;border-bottom:1px solid #fff"></div>
<div class="t" style="left:1116.5px;top:865.15px;font-size:14px;line-height:14px;color:#000;font-weight:normal;letter-spacing:0.76px;-webkit-text-stroke:0.45px #000;">Ajuste de Estoque</div>
<svg style="left:0;top:850px" width="1279" height="45" viewBox="0 850 1279 45">
<defs>
<linearGradient id="gpap" x1="0" y1="0" x2="0" y2="1"><stop offset="0" stop-color="#d8ecfc"/><stop offset="1" stop-color="#9ccaf0"/></linearGradient>
<linearGradient id="gprn" x1="0" y1="0" x2="0" y2="1"><stop offset="0" stop-color="#e8e8e8"/><stop offset="0.3" stop-color="#8a8a8a"/><stop offset="0.6" stop-color="#c8c8c8"/><stop offset="1" stop-color="#b0b0b0"/></linearGradient>
<linearGradient id="gbox" x1="0" y1="0" x2="0" y2="1"><stop offset="0" stop-color="#e8b060"/><stop offset="1" stop-color="#c88838"/></linearGradient>
<linearGradient id="gdoc" x1="0" y1="0" x2="0" y2="1"><stop offset="0" stop-color="#f4faff"/><stop offset="1" stop-color="#c0dcf0"/></linearGradient>
</defs>
<!-- printer -->
<rect x="25" y="857.5" width="17.5" height="11" fill="url(#gpap)" stroke="#4a8ac8" stroke-width="0.8"/>
<rect x="19" y="867" width="29.5" height="12" rx="1.5" fill="url(#gprn)" stroke="#7a7a7a" stroke-width="0.8"/>
<rect x="21" y="869" width="25.5" height="3.5" fill="#6a6a6a"/>
<rect x="25" y="878.5" width="17.5" height="8" fill="url(#gpap)" stroke="#4a8ac8" stroke-width="0.8"/>
<!-- thermal printer -->
<path d="M174,859 Q176,857 181,857 L197,857.5 Q201,858 201,862 L201,883 Q200,887 196,887.5 L189,888.3 L172,886 Q168.6,885 168.6,881 L169,870 Q169.5,866 172,863 Z" fill="#262626"/>
<path d="M175,860 Q177,858.5 181,858.5 L196,859 Q198.5,859.3 198.5,862 L196.5,868 L173,866.5 Z" fill="#3c3c3c"/>
<path d="M178,860.5 L193,861 L192,865.5 L177,865 Z" fill="#8a8a8a"/>
<path d="M170,876 L188,878.5" stroke="#4a4a4a" stroke-width="0.8"/>
<path d="M189,888 L190,866 Q193,865 200,862" stroke="#111" stroke-width="0.8" fill="none"/>
<!-- barcode -->
<path d="M359,862.5 H383 L388.5,868 V881.5 Q388.5,883.5 386.5,883.5 H359 Q357.3,883.5 357.3,881.5 V864.5 Q357.3,862.5 359,862.5 Z" fill="#f8f8f8" stroke="#202020" stroke-width="1.1"/>
<g fill="#1a1a1a"><rect x="363" y="867" width="2" height="12.5"/><rect x="366" y="867" width="1.2" height="12.5"/><rect x="368.2" y="867" width="2.2" height="12.5"/><rect x="371.5" y="867" width="1.2" height="12.5"/><rect x="373.7" y="867" width="2" height="12.5"/><rect x="376.7" y="867" width="1.4" height="12.5"/><rect x="379" y="867" width="2" height="12.5"/><rect x="382" y="867" width="1" height="12.5"/></g>
<!-- star -->
<rect x="548" y="857" width="32" height="32" fill="#fdfdfd"/>
<g transform="translate(563.6,872.3)">
<g transform="rotate(45)"><path d="M0,-10.5 L1.4,0 L0,10.5 L-1.4,0 Z" fill="#7a8aa0"/><path d="M-10.5,0 L0,1.4 L10.5,0 L0,-1.4 Z" fill="#7a8aa0"/><line x1="0" y1="-9" x2="0" y2="9" stroke="#e8eef6" stroke-width="0.6"/><line x1="-9" y1="0" x2="9" y2="0" stroke="#e8eef6" stroke-width="0.6"/></g>
<path d="M0,-13 L2.3,-2.3 L13,0 L2.3,2.3 L0,13 L-2.3,2.3 L-13,0 L-2.3,-2.3 Z" fill="#1c3a6a"/>
<path d="M0,-11 L1,-1 L11,0 L1,1 L0,11 L-1,1 L-11,0 L-1,-1 Z" fill="#5a84b8"/>
<circle r="1.7" fill="#ffffff"/>
</g>
<!-- limpar -->
<rect x="717.5" y="858.5" width="27" height="27" fill="#f4f8fc" stroke="#3a7ab8" stroke-width="1"/>
<rect x="718" y="859" width="26" height="2.5" fill="#f8c040"/>
<g stroke="#a8c4e0" stroke-width="0.8"><line x1="718" y1="865" x2="744" y2="865"/><line x1="718" y1="869.5" x2="744" y2="869.5"/><line x1="718" y1="879" x2="744" y2="879"/><line x1="725" y1="861" x2="725" y2="885"/><line x1="731" y1="861" x2="731" y2="885"/><line x1="737.5" y1="861" x2="737.5" y2="885"/></g>
<rect x="719" y="872" width="21" height="5.5" fill="#e84838" stroke="#b02818" stroke-width="0.6"/>
<path d="M740,869.5 L747,874.8 L740,880 Z" fill="#e84838" stroke="#b02818" stroke-width="0.6"/>
<!-- repetir -->
<path d="M900.5,857.5 H913 L917.5,862 V878.5 H900.5 Z" fill="url(#gdoc)" stroke="#3a88c0" stroke-width="1"/>
<path d="M912.5,864.5 H925 L929.5,869 V886.5 H912.5 Z" fill="url(#gdoc)" stroke="#3a88c0" stroke-width="1"/>
<!-- ajuste box -->
<path d="M1084.5,862 L1089,858 L1107.5,858 L1112,862 L1112,885 Q1112,886.7 1110,886.7 L1086,886.7 Q1084.5,886.7 1084.5,885 Z" fill="url(#gbox)" stroke="#a06a28" stroke-width="0.8"/>
<rect x="1089" y="865" width="18.5" height="17.5" fill="#d89848" stroke="#a87030" stroke-width="0.8"/>
<line x1="1089.5" y1="881.5" x2="1107" y2="881.5" stroke="#f8d8a0" stroke-width="0.8"/>
</svg>

</body></html>
